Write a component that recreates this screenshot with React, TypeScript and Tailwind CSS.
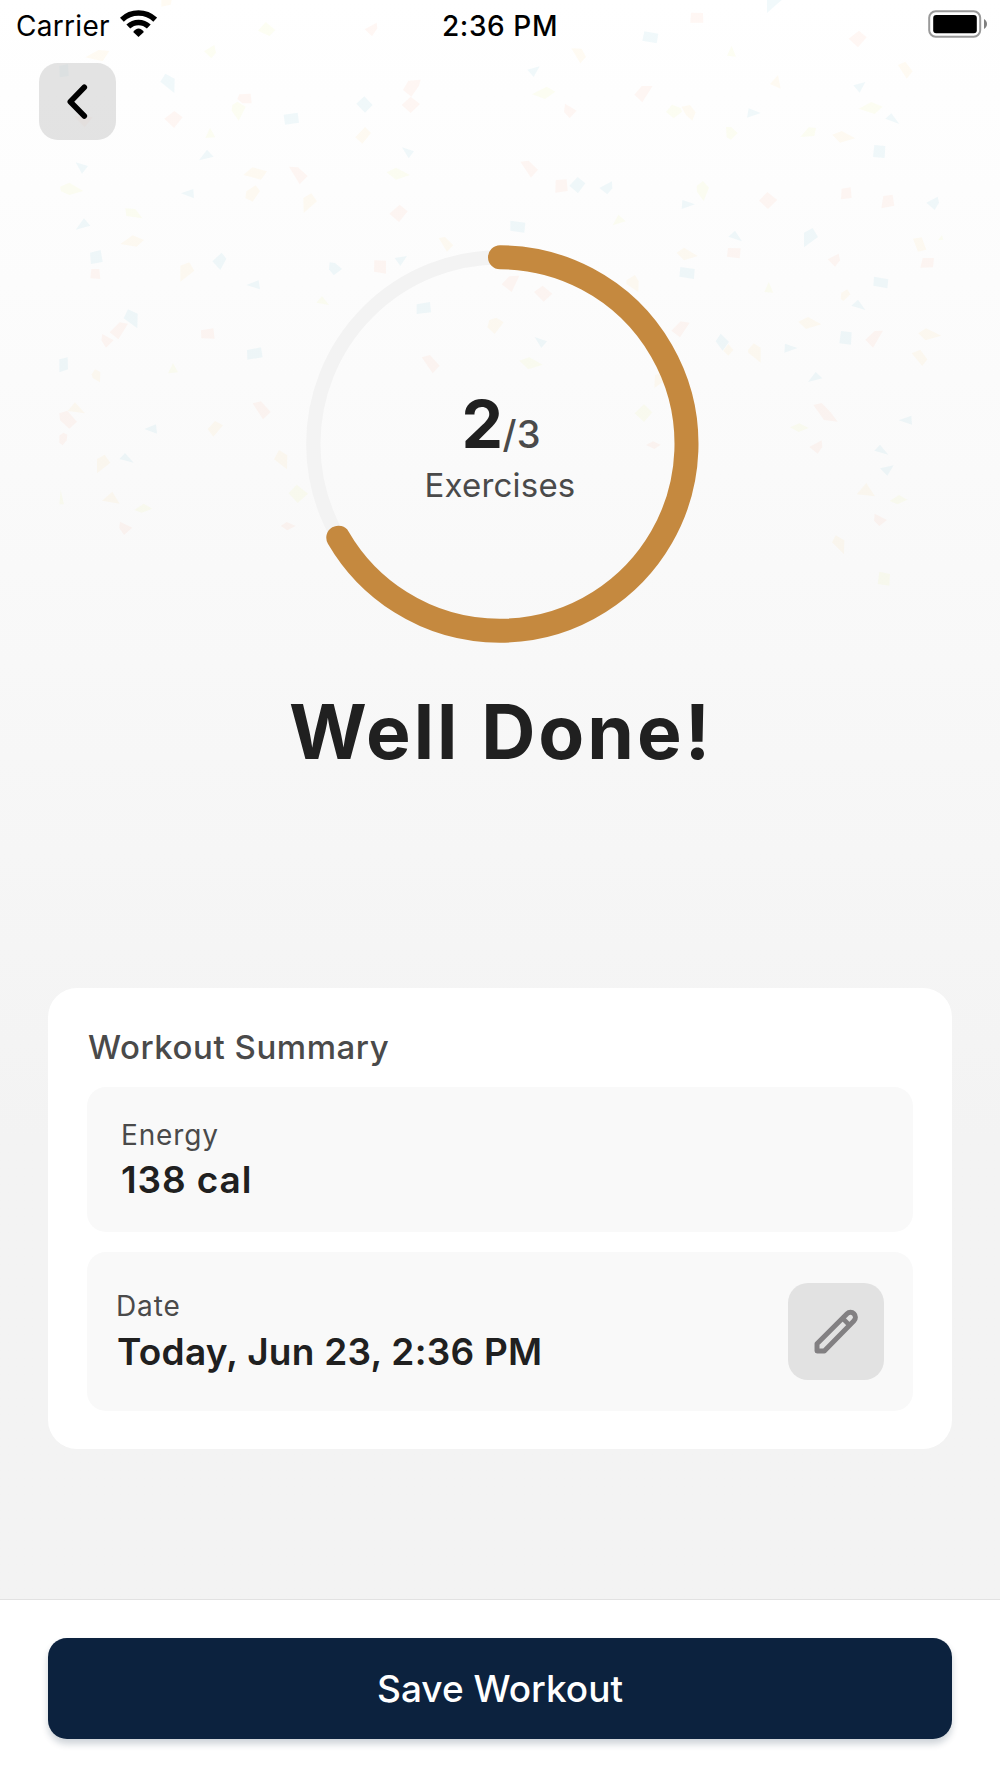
type Tone = "b" | "r" | "y" | "g";

const toneClass: Record<Tone, string> = {
  b: "fill-[#48b4cc]",
  r: "fill-[#ff9678]",
  y: "fill-[#ffce60]",
  g: "fill-[#e2f860]",
};

type Tile = { x: number; y: number; pieces: [Tone, string][] };

// Confetti pieces, in third-of-a-pixel units relative to each tile's corner.
const tiles: Tile[] = [
  {
    x: 0,
    y: 0,
    pieces: [
      ["y", "484,0 515,0 512,14 484,20"],
      ["g", "774,92 797,66 826,90 808,108"],
      ["g", "612,154 643,135 648,158 634,175"],
      ["y", "256,172 296,150 328,153 308,184"],
      ["b", "178,198 204,192 206,228 179,232"],
      ["r", "222,349 278,352 254,382"],
      ["b", "496,221 524,236 523,279 481,245"],
      ["r", "523,333 548,352 522,384 493,356"],
      ["r", "718,283 752,281 755,310 727,310 712,297"],
      ["g", "697,315 712,305 737,320 716,362 695,332"],
      ["b", "851,344 893,338 897,368 855,374"],
      ["g", "630,383 646,412 616,414"],
      ["b", "621,449 641,470 597,481"],
      ["b", "227,487 264,498 246,521"],
      ["g", "180,560 208,548 250,573 208,585 183,574"],
      ["b", "543,580 580,567 582,595"],
      ["y", "730,525 757,502 801,514 783,539"],
      ["y", "739,574 767,556 780,573 758,605 736,594"],
      ["r", "867,500 894,502 923,528 899,553"],
      ["y", "910,594 934,580 951,604 911,639"],
      ["g", "376,625 406,627 427,655 379,648"],
      ["b", "252,655 271,677 227,689"],
      ["y", "361,732 398,706 432,720 410,740"],
      ["b", "270,758 302,750 308,786 273,792"],
      ["r", "274,807 298,807 301,837 271,835"],
      ["b", "665,758 679,776 661,810 637,784"],
      ["y", "541,797 568,787 583,812 541,845"],
      ["b", "739,855 776,841 780,868"],
    ],
  },
  {
    x: 330,
    y: 0,
    pieces: [
      ["r", "104,88 140,68 142,85 126,109"],
      ["b", "943,94 985,101 980,130 937,122"],
      ["y", "724,145 755,146 768,171 751,190"],
      ["b", "592,209 629,199 611,231"],
      ["g", "606,283 650,260 676,275 645,297"],
      ["r", "235,242 272,239 267,257 244,290 219,270"],
      ["r", "242,290 270,312 242,339 215,315"],
      ["b", "103,289 128,315 105,338 79,311"],
      ["r", "705,311 740,332 719,354 702,336"],
      ["r", "935,258 968,258 937,307 913,284"],
      ["y", "105,381 123,399 97,431 76,412"],
      ["b", "216,442 252,454 236,475"],
      ["g", "170,517 198,503 240,525 198,539"],
      ["r", "571,485 596,482 624,509 603,533"],
      ["r", "677,540 710,538 713,573 676,578"],
      ["b", "743,531 766,550 744,580 718,557"],
      ["b", "808,564 846,544 847,565 832,583"],
      ["r", "209,614 233,634 207,666 178,641"],
      ["b", "541,662 586,668 583,698 541,692"],
      ["g", "865,644 887,664 848,676"],
      ["y", "326,714 345,711 370,736 351,755"],
      ["b", "194,774 231,768 211,798"],
      ["r", "133,781 168,782 168,821 132,815"],
      ["b", "-1,787 15,789 36,807 11,826 -3,808"],
      ["r", "538,829 568,827 545,876 515,853"],
      ["r", "612,876 638,857 667,881 641,905"],
      ["y", "889,841 915,825 926,844 925,876 889,852"],
    ],
  },
  {
    x: 660,
    y: 0,
    pieces: [
      ["b", "321,0 365,0 321,39"],
      ["r", "93,38 129,39 130,68 91,68"],
      ["r", "597,92 620,112 594,142 566,116"],
      ["g", "215,137 228,170 201,167"],
      ["y", "714,195 736,185 758,214 740,236"],
      ["y", "354,225 362,266 330,252"],
      ["b", "580,256 616,246 599,278"],
      ["g", "18,336 36,314 62,324 66,335 41,355"],
      ["y", "64,320 90,315 107,337 97,362 78,345"],
      ["b", "266,325 302,339 261,353"],
      ["g", "596,326 634,306 668,320 644,342"],
      ["b", "694,340 718,372 676,356"],
      ["g", "198,381 213,381 233,399 213,419 200,412"],
      ["g", "421,411 446,382 468,384 463,408"],
      ["y", "517,404 545,393 586,415 540,428"],
      ["b", "643,435 676,438 674,474 639,471"],
      ["g", "110,558 129,543 147,563 131,603 111,575"],
      ["b", "67,600 105,613 65,627"],
      ["r", "322,576 352,600 324,627 297,602"],
      ["r", "545,566 572,562 575,594 543,598"],
      ["r", "670,588 698,584 703,617 664,625"],
      ["b", "799,608 833,590 837,608 824,630"],
      ["b", "225,692 246,724 205,710"],
      ["b", "432,698 458,684 474,711 432,742"],
      ["y", "759,716 785,712 799,749 774,755"],
      ["r", "204,744 242,745 239,775 201,770"],
      ["y", "50,758 72,743 113,768 72,781"],
      ["r", "503,778 536,761 540,781 525,800"],
      ["r", "788,774 822,774 819,802 781,803"],
      ["b", "61,801 104,807 102,837 58,830"],
      ["b", "642,830 685,838 682,865 640,857"],
      ["g", "326,846 340,878 313,876"],
      ["g", "846,705 850,719 834,721"],
      ["y", "544,878 562,868 571,883 550,903 542,897"],
    ],
  },
  {
    x: 0,
    y: 290,
    pieces: [
      ["g", "966,18 987,45 949,38"],
      ["b", "384,58 413,71 412,115 371,85"],
      ["r", "359,97 384,101 355,148 329,127"],
      ["r", "307,132 341,151 318,173 304,151"],
      ["r", "603,121 640,115 644,146 604,145"],
      ["b", "741,180 783,172 788,202 742,209"],
      ["b", "178,208 203,202 204,238 178,247"],
      ["y", "275,253 285,238 301,246 300,277 278,264"],
      ["g", "519,219 534,247 504,250"],
      ["y", "225,337 255,370 203,363"],
      ["r", "178,370 202,362 231,395 208,416 180,391"],
      ["r", "178,437 190,428 202,434 200,451 188,466 178,458"],
      ["r", "758,340 783,334 812,366 789,388"],
      ["b", "433,417 468,403 471,431"],
      ["y", "645,393 669,406 640,440 623,417"],
      ["b", "375,489 401,518 358,507"],
      ["y", "291,507 314,494 331,518 291,550"],
      ["y", "822,508 837,480 862,496 861,538"],
      ["g", "890,584 924,611 893,639 866,610"],
      ["y", "337,605 359,641 306,632"],
      ["g", "182,600 192,643 178,643"],
      ["g", "403,660 431,641 457,656 425,668"],
      ["r", "360,695 397,713 372,735 358,714"],
      ["r", "842,708 860,696 887,708 862,721"],
    ],
  },
  {
    x: 330,
    y: 290,
    pieces: [
      ["b", "260,43 300,36 303,67 260,72"],
      ["y", "478,90 499,83 521,97 494,132 472,112"],
      ["b", "614,141 651,154 634,174"],
      ["r", "275,202 300,195 329,227 308,250"],
      ["g", "568,212 598,202 638,224 595,238"],
      ["y", "975,256 990,250 1000,275 973,294"],
      ["g", "942,343 967,367 942,396 914,370"],
      ["r", "948,465 969,454 992,464 973,477"],
    ],
  },
  {
    x: 660,
    y: 290,
    pieces: [
      ["r", "62,94 89,98 60,142 34,122"],
      ["b", "594,29 616,60 574,47"],
      ["y", "415,95 444,81 484,103 438,117"],
      ["b", "182,131 207,155 188,182 167,154"],
      ["y", "205,162 220,180 205,197 190,182"],
      ["y", "264,180 281,160 302,173 302,218 265,188"],
      ["b", "375,161 413,174 373,188"],
      ["b", "543,123 575,127 573,164 538,160"],
      ["r", "644,123 669,122 639,173 616,149"],
      ["y", "775,130 798,115 844,137 796,151"],
      ["y", "755,190 781,179 802,208 787,228"],
      ["b", "467,246 487,265 444,276"],
      ["r", "460,345 485,339 512,367 533,395 492,390"],
      ["g", "390,412 418,400 446,414 416,426"],
      ["r", "448,471 485,451 487,471 473,491"],
      ["b", "716,391 754,377 756,404"],
      ["b", "660,464 685,494 643,482"],
      ["b", "660,535 701,526 682,557"],
      ["y", "619,579 645,619 590,613"],
      ["g", "689,633 717,615 742,629 713,643"],
      ["r", "644,671 681,690 658,708 642,692"],
      ["y", "516,757 527,736 553,751 552,793"],
      ["g", "658,845 690,852 688,887 653,882"],
    ],
  },
];

function Confetti() {
  return (
    <svg
      className="pointer-events-none absolute left-0 top-0"
      width="1000"
      height="600"
      viewBox="0 0 1000 600"
      aria-hidden="true"
    >
      {tiles.map((t) => (
        <g key={`${t.x}-${t.y}`} transform={`translate(${t.x} ${t.y}) scale(0.33333)`}>
          {t.pieces.map(([tone, points]) => (
            <polygon key={points} points={points} className={toneClass[tone]} opacity="0.08" />
          ))}
        </g>
      ))}
    </svg>
  );
}

function StatusBar() {
  return (
    <div className="relative flex h-[50px] items-center justify-center text-[28px] leading-[52px] text-black">
      <div className="absolute left-[16px] top-0 flex items-center">
        <span className="tracking-[0.3px]">Carrier</span>
        <svg className="absolute left-[104px] top-[10px]" width="37" height="28" viewBox="0 0 37 28" fill="none">
          <path d="M1.9 9.700C11.200.8 25.800.8 35.200 9.700" stroke="#000" strokeWidth="5.500" />
          <path d="M8.300 16.600C14 11.100 23 11.100 28.800 16.600" stroke="#000" strokeWidth="5.500" />
          <path d="M13.200 22C16.200 17.300 20.900 17.300 23.900 22L18.500 27Z" fill="#000" />
        </svg>
      </div>
      <span className="pt-px font-medium tracking-[0.6px]">2:36 PM</span>
      <svg className="absolute left-[928px] top-[10px]" width="60" height="28" viewBox="0 0 60 28">
        <rect x="1.2" y="1.3" width="51" height="25.4" rx="6.5" fill="none" stroke="#999" strokeWidth="2" />
        <rect x="5.2" y="4.900" width="43.600" height="18.400" rx="3" />
        <path d="M56 9C60 11.500 60 16.500 56 19Z" fill="#808080" />
      </svg>
    </div>
  );
}

function ProgressRing() {
  return (
    <div className="relative mx-auto mt-[104px] h-[400px] w-[400px]">
      <svg className="absolute inset-0" width="400" height="400" viewBox="0 0 400 400" fill="none">
        <circle cx="200" cy="200" r="186.7" stroke="#f3f3f3" strokeWidth="14.3" />
        <path
          d="M200 13.300A186.700 186.700 0 1 1 38.300 293.700"
          stroke="#c5893f"
          strokeWidth="24"
          strokeLinecap="round"
        />
      </svg>
      <div className="relative flex flex-col items-center pt-[144px]">
        <div className="flex items-baseline justify-center whitespace-nowrap pl-[2px] leading-[72px]">
          <span className="text-[66px] font-bold tracking-[-0.5px] text-[#202020]">2</span>
          <span className="text-[38px] font-medium text-[#4a4a4a]">/3</span>
        </div>
        <div className="-mt-[5px] text-[33px] leading-[40px] tracking-[0.2px] text-[#4a4a4a]">Exercises</div>
      </div>
    </div>
  );
}

export default function App() {
  return (
    <div className="relative flex h-[1778px] w-[1000px] flex-col overflow-hidden bg-linear-to-b from-white from-0% via-[#f3f3f3] via-64% to-[#f3f3f3] font-['Inter',sans-serif]">
      <Confetti />
      <StatusBar />
      <div className="relative flex h-[90px] pl-[39px] pt-[13px]">
        <button className="flex h-[77px] w-[77px] items-center justify-center rounded-[19px] bg-[#c8c8c8]/50" aria-label="Back">
          <svg width="77" height="77" viewBox="0 0 77 77" fill="none">
            <path d="M45.300 24.300L31.300 38.700L45.300 53" stroke="#000" strokeWidth="5.600" strokeLinecap="round" strokeLinejoin="round" />
          </svg>
        </button>
      </div>

      <ProgressRing />

      <h1 className="mt-[40px] pl-[2px] text-center text-[75px] font-bold leading-[96px] tracking-[3px] text-[#202020]">
        Well Done!
      </h1>

      <section className="relative mx-[48.300px] mt-[208px] flex h-[461px] flex-col rounded-[29px] bg-white px-[38.700px] pt-[39px]">
        <h2 className="pl-px text-[33px] font-medium leading-[40px] tracking-[0.55px] text-[#4a4a4a]">Workout Summary</h2>
        <div className="mt-[20px] h-[145px] rounded-[19px] bg-[#f9f9f9] pl-[34px] pt-[31px]">
          <div className="text-[28px] leading-[34px] tracking-[0.85px] text-[#4a4a4a]">Energy</div>
          <div className="mt-[6px] text-[37px] font-semibold leading-[44px] tracking-[0.9px] text-[#202020]">138 cal</div>
        </div>
        <div className="mt-[19.500px] flex h-[159.500px] items-center justify-between rounded-[19px] bg-[#f9f9f9] pl-[29px] pr-[29px]">
          <div>
            <div className="pt-px text-[28px] leading-[34px] tracking-[0.9px] text-[#4a4a4a]">Date</div>
            <div className="mt-[7px] pl-px text-[37px] font-semibold leading-[44px] tracking-[0.25px] text-[#202020]">
              Today, Jun 23, 2:36 PM
            </div>
          </div>
          <button className="flex h-[96.500px] w-[96.500px] items-center justify-center rounded-[20px] bg-[#e2e2e2]" aria-label="Edit date">
            <svg width="97" height="97" viewBox="142 127 291 291" fill="none">
              <path
                d="M229.500 331.500V309.500L320 219A14.850 14.850 0 0 1 341 240L251.500 331.500Z"
                stroke="#828082"
                strokeWidth="15"
                strokeLinejoin="round"
              />
              <path d="M306 232L328 254" stroke="#828082" strokeWidth="14" />
            </svg>
          </button>
        </div>
      </section>

      <footer className="relative mt-auto h-[179px] border-t border-[#e2e2e2] bg-white px-[48.300px] pt-[38px]">
        <button className="flex h-[101px] w-full items-center justify-center rounded-[19px] bg-[#0c223e] text-[37px] font-medium text-white shadow-[0_5px_7px_rgba(12,34,62,0.2)]">
          Save Workout
        </button>
      </footer>
    </div>
  );
}
